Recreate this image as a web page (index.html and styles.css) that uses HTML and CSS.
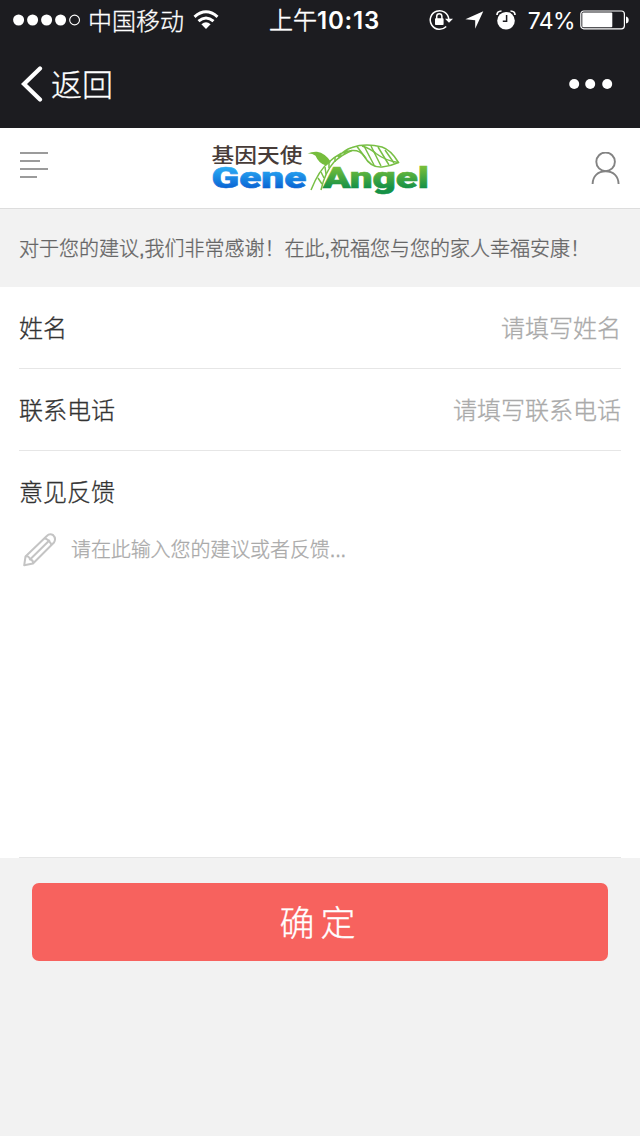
FILE: index.html
```html
<!DOCTYPE html>
<html lang="zh-CN">
<head>
<meta charset="utf-8">
<title>意见反馈</title>
<link rel="stylesheet" href="styles.css">
</head>
<body>
<header class="dark">
  <div class="status">
    <div class="carrier">
      <svg class="signal" width="68" height="12" viewBox="0 0 68 12" fill="#fff"><circle cx="5.6" cy="6" r="5.5"/><circle cx="19.6" cy="6" r="5.5"/><circle cx="33.6" cy="6" r="5.5"/><circle cx="47.6" cy="6" r="5.5"/><circle cx="61.6" cy="6" r="4.9" fill="none" stroke="#fff" stroke-width="1.1"/></svg>
      <span class="carrier-name">中国移动</span>
      <svg width="26" height="20" viewBox="0 0 26 20" fill="none" stroke="#fff" stroke-width="3"><path d="M1.500 6.800Q13-3.200 24.500 6.800M5.500 11.200Q13 4.800 20.500 11.200"/><path d="M8.400 14.300Q13 10.300 17.600 14.300L13 19z" fill="#fff" stroke="none"/></svg>
    </div>
    <div class="clock">上午<b>10:13</b></div>
    <div class="indicators">
      <svg class="lock" width="24" height="22" viewBox="0 0 24 22"><path d="M17.200 17.500A9.300 9.300 0 1 1 19.800 10" fill="none" stroke="#fff" stroke-width="1.500"/><path d="M16 9.800h8l-4 4z" fill="#fff"/><rect x="6" y="9.300" width="8.600" height="6.800" rx=".8" fill="#fff"/><path d="M7.700 10V7.400a2.600 2.600 0 0 1 5.200 0V10" fill="none" stroke="#fff" stroke-width="1.500"/></svg>
      <svg class="arrow" width="19" height="18" viewBox="0 0 19 18"><path d="M18.300.2L10.200 17.800V9.200L.4 8.200z" fill="#fff"/></svg>
      <svg class="alarm" width="20" height="20" viewBox="0 0 20 20"><circle cx="10" cy="10.700" r="8.800" fill="#fff"/><path d="M10.600 5v6.300H6.800" fill="none" stroke="#1c1c20" stroke-width="1.500"/><path d="M1 5Q1 1.200 5.500 1M19 5Q19 1.200 14.500 1" fill="none" stroke="#fff" stroke-width="1.700"/></svg>
      <span class="percent">74%</span>
      <svg class="battery" width="49" height="20" viewBox="0 0 49 20"><rect x=".8" y="1" width="43.600" height="17.800" rx="3" fill="none" stroke="#fff" stroke-width="1.200"/><rect x="2.300" y="2.500" width="30" height="14.800" rx="1" fill="#fff"/><path d="M46 6.500q2.700.5 2.700 3.500t-2.700 3.500z" fill="#fff"/></svg>
    </div>
  </div>
  <div class="nav">
    <svg width="22" height="36" viewBox="0 0 22 36"><path d="M19 2.500L3 18l16 15.500" fill="none" stroke="#fff" stroke-width="4.200" stroke-linecap="round"/></svg>
    <span class="back">返回</span>
    <svg class="more" width="44" height="12" viewBox="0 0 44 12" fill="#fff"><circle cx="5.200" cy="6" r="5"/><circle cx="21.200" cy="6" r="5"/><circle cx="38.200" cy="6" r="5"/></svg>
  </div>
</header>
<div class="brand">
  <svg class="menu" width="28" height="28" viewBox="0 0 28 28"><path d="M0 1h28M0 9h20M0 17h28M0 25h17" stroke="#9b9b9b" stroke-width="1.900"/></svg>
  <svg class="logo" width="220" height="60" viewBox="211 137 220 60">
    <defs>
      <linearGradient id="blue" gradientUnits="userSpaceOnUse" x1="0" y1="167" x2="0" y2="189"><stop offset="0" stop-color="#2baef5"/><stop offset="1" stop-color="#0861d2"/></linearGradient>
      <linearGradient id="green" gradientUnits="userSpaceOnUse" x1="0" y1="167" x2="0" y2="193"><stop offset="0" stop-color="#76be3a"/><stop offset=".8" stop-color="#159146"/></linearGradient>
    </defs>
    <text x="211.500" y="163" class="logo-cn" textLength="91" lengthAdjust="spacingAndGlyphs">基因天使</text>
    <text x="211.500" y="188.300" class="logo-en" fill="url(#blue)" stroke="url(#blue)" textLength="95" lengthAdjust="spacingAndGlyphs">Gene</text>
    <text x="323" y="188.300" class="logo-en" fill="url(#green)" stroke="url(#green)" textLength="106" lengthAdjust="spacingAndGlyphs">Angel</text>
    <path d="M311 190L320 172Q324 166 331 161L341 155L335 162Q328 169 325 178L321 190z" fill="#fff"/>
    <path d="M307.500 153.500Q312 151.500 317 151.800Q325 153 331 162L326 165.500Q319 164 315.500 155.800Q312 153 307.500 153.500z" fill="#76bd3d"/>
    <g fill="none" stroke="#78bf45" stroke-width="1.500">
      <path d="M311 190Q319 170 329 162Q341 151 352 150.500Q360 150 364 156Q371 168 382 167Q391 166 398.500 162.500Q391 150 382 147Q365 143 352 147.500Q344 150 338 157"/>
      <path d="M321 190Q325 172 334 162Q342 154.500 352 150.500M362 146Q371 149 376 153.500Q386 161 398.500 162.500"/>
      <path d="M357 146.500l9 12M364 146l10 19M371 146l10 20M378 147l11 18M385 150l9 13M347 150l-3 4M341 153l-2 5M335 157v5M329 162v6M325 167l1 7M321 172l3 6M318 178l4 6"/>
    </g>
  </svg>
  <svg class="user" width="30" height="34" viewBox="0 0 30 34" fill="none" stroke="#838383" stroke-width="1.900"><circle cx="14.600" cy="9.800" r="9.300"/><path d="M1.600 32C1.800 24 7 19.300 14.600 19.300S27.400 24 27.600 32"/></svg>
</div>
<p class="notice">对于您的建议,我们非常感谢！在此,祝福您与您的家人幸福安康！</p>
<main class="form">
  <div class="row"><span>姓名</span><span class="hint">请填写姓名</span></div>
  <div class="row"><span>联系电话</span><span class="hint">请填写联系电话</span></div>
  <div class="feedback">
    <div class="label">意见反馈</div>
    <div class="entry">
      <svg width="34" height="34" viewBox="0 0 34 34" fill="none" stroke="#c4c4c4" stroke-width="2" stroke-linejoin="round"><path d="M1.200 32.300L2.500 23.500L23.800 3Q26.500.2 30 2Q33.500 5.300 31 9.500L10 30.500z"/><path d="M2.500 23.500Q6 22.500 7 26.500Q10.500 27 10 30.500M7 26.500L26.800 7M21.500 5.300Q26 6.500 28.500 12"/></svg>
      <span class="prompt">请在此输入您的建议或者反馈...</span>
    </div>
  </div>
</main>
<button class="submit">确定</button>
</body>
</html>
```
FILE: styles.css
```css
* { box-sizing: border-box; }
body {
  margin: 0;
  min-height: 1136px;
  background: #f2f2f2;
  color: #333;
  font-family: "Liberation Sans", "Noto Sans CJK SC", sans-serif;
  font-weight: 300;
  -webkit-text-stroke: .3px;
}
svg { display: block; flex: none; }
.dark { height: 128px; background: #1c1c20; color: #fff; }
.status {
  display: grid;
  grid-template-columns: 268px 1fr auto;
  height: 40px;
  padding: 0 11px 0 13px;
  align-items: center;
  font-size: 24px;
}
.carrier, .indicators { display: flex; align-items: center; height: 40px; }
.carrier-name { margin: 0 9px 0 7px; line-height: 36px; padding-top: 3px; }
.clock { margin-left: -12px; padding-top: 2px; line-height: 36px; white-space: nowrap; -webkit-text-stroke: .5px; }
.clock b { font-family: Inter, sans-serif; font-weight: 600; font-size: 24px; letter-spacing: .8px; -webkit-text-stroke: 0; }
.lock { margin-right: 12px; }
.arrow { margin-right: 12px; }
.alarm { margin-right: 12px; }
.percent { padding-top: 2px; font-family: Inter, sans-serif; font-weight: 400; font-size: 23px; letter-spacing: -.6px; margin-right: 5px; -webkit-text-stroke: 0; }
.nav { display: flex; align-items: center; height: 88px; padding: 0 27px 0 21px; }
.back { margin-left: 8px; padding-top: 4px; font-size: 31px; line-height: 84px; }
.more { margin-left: auto; }
.brand {
  display: flex;
  justify-content: space-between;
  height: 81px;
  padding: 9px 19px 0 20px;
  background: #fff;
  border-bottom: 1px solid #ddd;
}
.menu { margin-top: 15px; }
.logo { margin-left: 2px; }
.user { margin-top: 15px; }
.logo-cn { font: 500 20.500px "Noto Sans CJK SC", sans-serif; fill: #473c38; -webkit-text-stroke: 0; }
.logo-en { font: 900 29.500px Roboto, sans-serif; stroke-width: .6; }
.notice {
  margin: 0;
  height: 78px;
  padding: 1px 0 0 19px;
  font-size: 20px;
  line-height: 78px;
  color: #666;
  white-space: nowrap;
}
.form { height: 571px; padding: 0 19px; background: #fff; }
.row {
  display: flex;
  justify-content: space-between;
  height: 82px;
  border-bottom: 1px solid #e6e6e6;
  font-size: 24px;
  line-height: 83px;
}
.hint { color: #aaa; }
.feedback { height: 407px; border-bottom: 1px solid #e6e6e6; }
.label { height: 82px; font-size: 24px; line-height: 83px; }
.entry {
  display: flex;
  align-items: center;
  height: 34px;
  padding-left: 4px;
  gap: 14px;
  font-size: 20px;
  line-height: 34px;
  color: #aaa;
}
.prompt { letter-spacing: -.1px; }
.submit {
  display: block;
  width: 576px;
  height: 78px;
  margin: 25px auto 0;
  padding: 0 0 2px 1px;
  border: 0;
  border-radius: 7px;
  background: #f7625e;
  color: #fff;
  font: 300 35px/76px "Noto Sans CJK SC", sans-serif;
  letter-spacing: 6px;
  -webkit-text-stroke: .3px;
}
```
